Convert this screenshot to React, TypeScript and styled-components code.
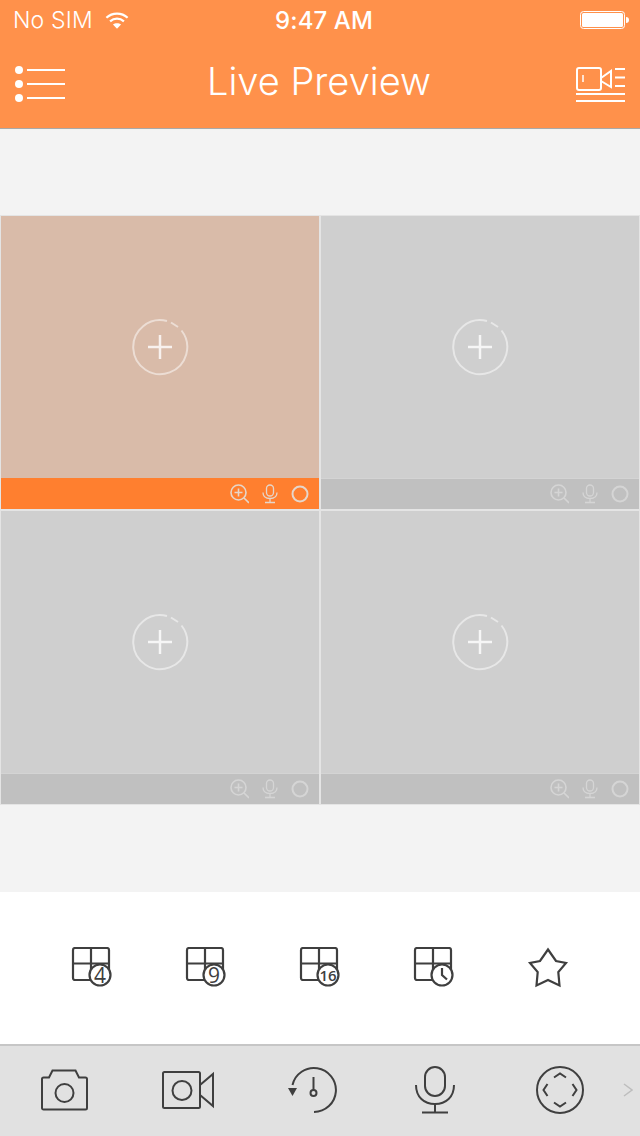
import React from "react";
import styled, { createGlobalStyle } from "styled-components";

const GlobalStyle = createGlobalStyle`
  html, body {
    margin: 0;
    padding: 0;
    background: #f3f3f3;
  }
`;

const Page = styled.div`
  width: 640px;
  height: 1136px;
  display: flex;
  flex-direction: column;
  overflow: hidden;
  font-family: Inter, "Liberation Sans", sans-serif;
`;

const Header = styled.header`
  height: 129px;
  flex: none;
  box-sizing: border-box;
  background: #ff914b;
  border-bottom: 1px solid #a9a9a9;
  color: #fff;
`;

const StatusBar = styled.div`
  height: 40px;
  display: grid;
  grid-template-columns: 1fr auto 1fr;
  align-items: center;
  padding: 0 13px;
`;

const StatusLeft = styled.div`
  display: flex;
  align-items: center;
  gap: 12px;
  font-size: 23px;
  font-weight: 300;
  letter-spacing: 0.15px;
`;

const Clock = styled.div`
  margin-left: 8px;
  font-size: 24px;
  font-weight: 500;
  letter-spacing: 0.1px;
`;

const StatusRight = styled.div`
  display: flex;
  justify-content: flex-end;
  margin-right: -3px;
`;

const NavBar = styled.div`
  height: 88px;
  box-sizing: border-box;
  display: flex;
  align-items: center;
  justify-content: space-between;
  padding: 0 14px 6px;
`;

const NavIcon = styled.div<{ $drop: number }>`
  display: flex;
  margin-top: ${(p) => p.$drop}px;
`;

const Title = styled.h1`
  margin: 0 4px 0 0;
  font-size: 38px;
  font-weight: 300;
  letter-spacing: 0;
`;

const Content = styled.main`
  flex: 1;
  display: flex;
  flex-direction: column;
  padding-top: 86px;
`;

const Grid = styled.div`
  display: grid;
  grid-template-columns: 320px 320px;
  grid-auto-rows: 295px;
`;

const Cell = styled.div`
  box-sizing: border-box;
  display: flex;
  flex-direction: column;
  border: 1px solid #e4e4e4;
  background: #cfcfcf;
`;

const Video = styled.div<{ $active?: boolean }>`
  flex: 1;
  display: flex;
  align-items: center;
  justify-content: center;
  background: ${(p) => (p.$active ? "#d9bba9" : "#cfcfcf")};
`;

const CellBar = styled.div<{ $active?: boolean }>`
  height: 30px;
  flex: none;
  display: flex;
  align-items: center;
  justify-content: flex-end;
  gap: 13px;
  padding-right: 10px;
  background: ${(p) => (p.$active ? "#ff7f2f" : "#c0c0c0")};
  border-top: 1px solid ${(p) => (p.$active ? "#ff7f2f" : "#d4d4d4")};
  color: ${(p) => (p.$active ? "#e6d6ca" : "#d5d5d5")};
`;

const ModeRow = styled.section`
  margin-top: 87px;
  height: 152px;
  background: #fff;
  display: grid;
  grid-template-columns: repeat(5, 114px);
  padding-left: 35px;
  align-items: center;
  justify-items: center;
  color: #3f3f3f;
`;

const Toolbar = styled.footer`
  flex: 1;
  background: #e1e1e1;
  border-top: 2px solid #c6c6c6;
  display: grid;
  grid-template-columns: 127px 122px 124px 124px 126px 1fr;
  align-items: center;
  justify-items: center;
  color: #3f3f3f;
  padding: 0 8px 2px 0;
`;

const BadgeText = styled.text`
  font-family: "Open Sans", "Liberation Sans", sans-serif;
  fill: currentColor;
  stroke: none;
  text-anchor: middle;
`;

const MenuIcon = () => (
  <svg width="52" height="40" viewBox="0 0 52 40" fill="none" stroke="#fff" strokeWidth="2">
    <circle cx="5" cy="4" r="4" fill="#fff" stroke="none" />
    <circle cx="5" cy="18" r="4" fill="#fff" stroke="none" />
    <circle cx="5" cy="32" r="4" fill="#fff" stroke="none" />
    <path d="M13 4h38M13 18h38M13 32h38" />
  </svg>
);

const Wifi = () => (
  <svg width="24" height="20" viewBox="0 0 26 20" fill="none" stroke="#fff" strokeWidth="2.4">
    <path d="M1.5 7.5C8 1.5 18 1.5 24.5 7.5" />
    <path d="M5.5 11.5C10 7.5 16 7.5 20.5 11.5" />
    <path d="M13 19.5L8.6 15C11 13 15 13 17.4 15Z" fill="#fff" stroke="none" />
  </svg>
);

const Battery = () => (
  <svg width="50" height="20" viewBox="0 0 50 20">
    <rect x="0.5" y="1.5" width="44" height="17" rx="3" fill="none" stroke="#fff" />
    <rect x="2" y="3" width="41" height="14" rx="1.5" fill="#fff" />
    <path d="M46 7c2 0 3 1 3 3s-1 3-3 3z" fill="#fff" />
  </svg>
);

const CameraList = () => (
  <svg width="50" height="36" viewBox="0 0 50 36" fill="none" stroke="#fff">
    <rect x="1" y="1" width="24" height="22" rx="2" strokeWidth="2" />
    <path d="M7 8v7" strokeWidth="1.5" />
    <path d="M25 11l10-7v16l-10-6" strokeWidth="2" />
    <path d="M39 2h10M39 10.5h10M39 19h10M0 27h49M0 34h49" strokeWidth="2" />
  </svg>
);

const AddChannel = () => (
  <svg width="60" height="60" viewBox="0 0 60 60" fill="none" stroke="#fff" strokeOpacity="0.5" strokeWidth="2">
    <path d="M37 4A27 27 0 1 0 51.5 13.5" />
    <path d="M41 5.5L48 10" />
    <path d="M30 18v24M18 30h24" strokeOpacity="0.8" strokeWidth="2.5" />
  </svg>
);

const ZoomIcon = () => (
  <svg width="20" height="20" viewBox="0 0 20 20" fill="none" stroke="currentColor" strokeWidth="1.6">
    <circle cx="9.5" cy="8.5" r="7.5" />
    <path d="M9.5 4.5v8M5.5 8.5h8M15 14l5 5" />
  </svg>
);

const SmallMic = () => (
  <svg width="16" height="20" viewBox="0 0 16 20" fill="none" stroke="currentColor" strokeWidth="1.3">
    <rect x="4.5" y="1" width="7" height="11" rx="3.5" />
    <path d="M1 8.5c0 4 3 6 7 6s7-2 7-6M8 14.5V18M3 18.5h10" />
  </svg>
);

const Ring = () => (
  <svg width="18" height="18" viewBox="0 0 18 18" fill="none" stroke="currentColor" strokeWidth="2">
    <circle cx="9" cy="9" r="7.5" />
  </svg>
);

const Tile = ({ active }: { active?: boolean }) => (
  <Cell>
    <Video $active={active}>
      <AddChannel />
    </Video>
    <CellBar $active={active}>
      <ZoomIcon />
      <SmallMic />
      <Ring />
    </CellBar>
  </Cell>
);

const Layout = ({ children }: { children: React.ReactNode }) => (
  <svg width="42" height="42" viewBox="0 0 42 42" fill="none" stroke="currentColor" strokeWidth="2.2">
    <rect x="2" y="1" width="36" height="32" rx="2" />
    <path d="M20 1v32M2 16.5h36" />
    <circle cx="29" cy="28" r="10.5" fill="#fff" />
    {children}
  </svg>
);

const Star = () => (
  <svg width="42" height="42" viewBox="0 0 42 42" fill="none" stroke="currentColor" strokeWidth="2.2">
    <path d="M21 2.500L29 14L39 16L31.300 25L32.500 38.500L21 33L9.500 38.500L10.700 25L3 16L13 14Z" />
  </svg>
);

const Camera = () => (
  <svg width="48" height="42" viewBox="0 0 48 42" fill="none" stroke="currentColor" strokeWidth="2">
    <path d="M2 10c0-1 .6-1.500 1.600-1.500H9L12.500 1.500h23L39 8.500h6.400c1 0 1.600.5 1.600 1.500v29c0 1-.6 1.500-1.600 1.500H3.600c-1 0-1.600-.5-1.600-1.500z" />
    <circle cx="24.500" cy="24" r="9" />
  </svg>
);

const VideoCam = () => (
  <svg width="52" height="38" viewBox="0 0 52 38" fill="none" stroke="currentColor" strokeWidth="2">
    <rect x="1" y="1" width="37" height="36" rx="1.5" />
    <circle cx="20" cy="19.5" r="9.5" />
    <path d="M38 14L51 3v32L38 24" />
  </svg>
);

const Playback = () => (
  <svg width="54" height="48" viewBox="0 0 54 48" fill="none" stroke="currentColor" strokeWidth="2">
    <path d="M8.500 19A22 22 0 1 1 30 46" />
    <path d="M4 22h9l-4.500 8z" fill="currentColor" stroke="none" />
    <path d="M29.500 11v13" />
    <circle cx="29.500" cy="27" r="3" />
  </svg>
);

const BigMic = () => (
  <svg width="42" height="48" viewBox="0 0 42 48" fill="none" stroke="currentColor" strokeWidth="2">
    <rect x="11" y="1" width="20" height="29" rx="10" />
    <path d="M2 19c0 12 8 19 19 19s19-7 19-19M21 38v8M8 46.500h26" />
  </svg>
);

const Ptz = () => (
  <svg width="48" height="48" viewBox="0 0 48 48" fill="none" stroke="currentColor" strokeWidth="2">
    <circle cx="24" cy="24" r="23" />
    <path d="M18 11.500l6-4 6 4M18 36.500l6 4 6-4M11.500 18l-4 6 4 6M36.500 18l4 6-4 6" />
  </svg>
);

const Chevron = () => (
  <svg width="10" height="14" viewBox="0 0 10 14" fill="none" stroke="#bdbdbd" strokeWidth="1.5">
    <path d="M1 1l8 6-8 6" />
  </svg>
);

const App = () => (
  <Page>
    <GlobalStyle />
    <Header>
      <StatusBar>
        <StatusLeft>
          No SIM
          <Wifi />
        </StatusLeft>
        <Clock>9:47 AM</Clock>
        <StatusRight>
          <Battery />
        </StatusRight>
      </StatusBar>
      <NavBar>
        <NavIcon $drop={10}>
          <MenuIcon />
        </NavIcon>
        <Title>Live Preview</Title>
        <NavIcon $drop={8}>
          <CameraList />
        </NavIcon>
      </NavBar>
    </Header>
    <Content>
      <Grid>
        <Tile active />
        <Tile />
        <Tile />
        <Tile />
      </Grid>
      <ModeRow>
        <Layout>
          <BadgeText x="29" y="35.5" fontSize="21" fontWeight="500">4</BadgeText>
        </Layout>
        <Layout>
          <BadgeText x="29" y="35.5" fontSize="21" fontWeight="500">9</BadgeText>
        </Layout>
        <Layout>
          <BadgeText x="29" y="33.5" fontSize="15" fontWeight="600">16</BadgeText>
        </Layout>
        <Layout>
          <path d="M29 21v7l5 4.5" />
        </Layout>
        <Star />
      </ModeRow>
      <Toolbar>
        <Camera />
        <VideoCam />
        <Playback />
        <BigMic />
        <Ptz />
        <Chevron />
      </Toolbar>
    </Content>
  </Page>
);

export default App;
